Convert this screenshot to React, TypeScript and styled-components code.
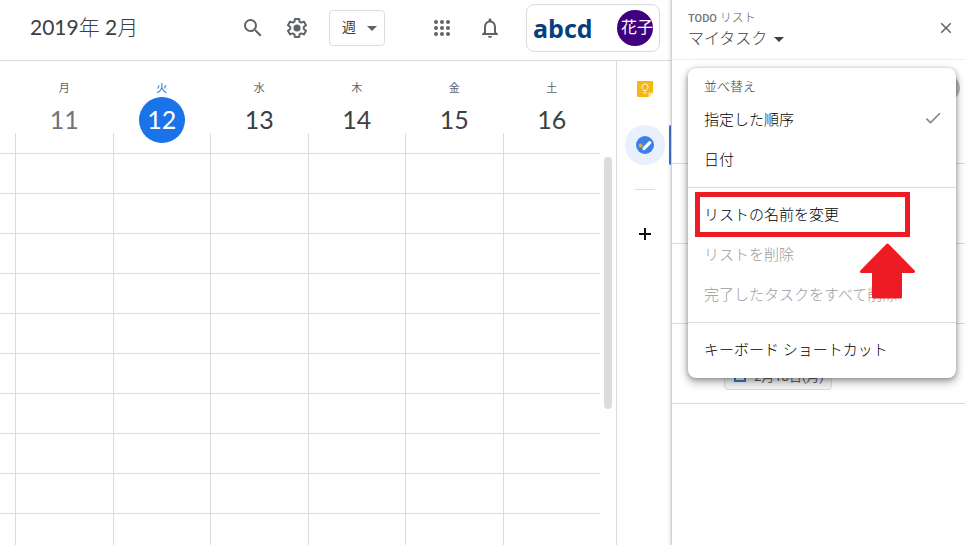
import React from "react";
import styled, { createGlobalStyle, css } from "styled-components";
import { MdNotificationsNone, MdSearch, MdCheck, MdClose } from "react-icons/md";

const line = "#dadce0";
const grey = "#5f6368";
const blue = "#1a73e8";

const GlobalStyle = createGlobalStyle`
  * { box-sizing: border-box; }
  body {
    margin: 0;
    background: #fff;
    color: #3c4043;
    font-family: Roboto, "Noto Sans CJK JP", sans-serif;
  }
  button, select { font: inherit; color: inherit; }
`;

const Page = styled.div`
  display: flex;
  height: 100vh;
  overflow: hidden;
`;

const Main = styled.main`
  flex: 1;
  min-width: 0;
  display: flex;
  flex-direction: column;
`;

const TopBar = styled.header`
  flex: none;
  display: flex;
  align-items: center;
  height: 61px;
  padding: 0 11px 5px 30px;
  border-bottom: 1px solid ${line};
`;

const MonthTitle = styled.h1`
  flex: 1;
  margin: 0;
  padding-bottom: 2px;
  font: 400 21px/32px Lato, "Noto Sans CJK JP", sans-serif;
  white-space: nowrap;
`;

const TitleUnit = styled.span`
  font-weight: 300;
`;

const IconButton = styled.button<{ $size?: number }>`
  display: flex;
  flex: none;
  align-items: center;
  justify-content: center;
  width: ${(p) => p.$size ?? 44}px;
  height: ${(p) => p.$size ?? 44}px;
  padding: 0;
  border: 0;
  border-radius: 50%;
  background: none;
  color: ${grey};
  cursor: pointer;
`;

const ViewPicker = styled.label`
  position: relative;
  display: flex;
  margin: 0 33px 0 10px;
`;

const ViewSelect = styled.select`
  appearance: none;
  width: 56px;
  height: 36px;
  padding: 0 20px 2px 12px;
  border: 1px solid ${line};
  border-radius: 4px;
  background: #fff;
  font-size: 14px;
`;

const PickerArrow = styled.svg`
  position: absolute;
  right: 8px;
  top: 16px;
  pointer-events: none;
`;

const AccountBox = styled.div`
  display: flex;
  align-items: center;
  justify-content: space-between;
  width: 134px;
  height: 48px;
  margin-left: 12px;
  padding: 0 6px;
  border: 1px solid ${line};
  border-radius: 8px;
`;

const Brand = styled.span`
  font: 700 25px/32px "Open Sans", sans-serif;
  color: #043f80;
`;

const Avatar = styled.button`
  width: 36px;
  height: 36px;
  padding: 0 0 0 4px;
  overflow: hidden;
  border: 0;
  border-radius: 50%;
  background: #3f0080;
  color: #fff;
  font-size: 16px;
  line-height: 36px;
  text-align: left;
  white-space: nowrap;
`;

const Body = styled.div`
  flex: 1;
  min-height: 0;
  display: flex;
`;

const Calendar = styled.section`
  flex: 1;
  min-width: 0;
  overflow: hidden;
`;

const WeekTable = styled.table`
  width: 100%;
  table-layout: fixed;
  border-collapse: separate;
  border-spacing: 0;
`;

const GutterCol = styled.col`
  width: 15px;
`;

const GutterCell = styled.td`
  height: 40px;
  padding: 0;
  border-bottom: 1px solid ${line};
`;

const DayHead = styled.th`
  position: relative;
  height: 93px;
  padding: 20px 0 0 1px;
  border-bottom: 1px solid ${line};
  vertical-align: top;
  font-weight: 400;

  &::before {
    content: "";
    position: absolute;
    left: 0;
    bottom: 0;
    height: 20px;
    border-left: 1px solid ${line};
  }
`;

const Weekday = styled.div<{ $today?: boolean }>`
  font-size: 11px;
  line-height: 16px;
  color: ${(p) => (p.$today ? blue : grey)};
`;

type Tone = "past" | "today" | "next";

const DayNumber = styled.div<{ $tone: Tone }>`
  width: 46px;
  height: 46px;
  margin: 0 auto;
  border-radius: 50%;
  font: 400 25px/45px Lato, sans-serif;
  color: ${(p) => (p.$tone === "past" ? "#70757a" : "#3c4043")};
  ${(p) =>
    p.$tone === "today" &&
    css`
      background: ${blue};
      color: #fff;
    `}
`;

const HourCell = styled.td`
  height: 40px;
  padding: 0;
  border-left: 1px solid ${line};
  border-bottom: 1px solid ${line};
`;

const ScrollTrack = styled.div`
  flex: none;
  width: 16px;
  padding: 96px 4px 0;
`;

const ScrollThumb = styled.div`
  height: 252px;
  border-radius: 4px;
  background: ${line};
`;

const Rail = styled.nav`
  flex: none;
  display: flex;
  flex-direction: column;
  align-items: center;
  width: 55px;
  padding: 8px 0 0 2px;
  border-left: 1px solid ${line};
`;

const RailButton = styled.button<{ $active?: boolean }>`
  position: relative;
  display: flex;
  flex: none;
  align-items: center;
  justify-content: center;
  width: 40px;
  height: 40px;
  margin-bottom: 16px;
  padding: 0;
  border: 0;
  border-radius: 50%;
  background: ${(p) => (p.$active ? "#e8f0fe" : "none")};
  ${(p) =>
    p.$active &&
    css`
      &::after {
        content: "";
        position: absolute;
        left: 44px;
        top: 0;
        width: 3px;
        height: 40px;
        border-radius: 2px 0 0 2px;
        background: #3c6fd0;
      }
    `}
`;

const RailDivider = styled.hr`
  width: 20px;
  margin: 8px 0 24px;
  border: 0;
  border-top: 1px solid ${line};
`;

const Panel = styled.aside`
  position: relative;
  flex: none;
  width: 294px;
  border-left: 1px solid #d0d1d3;
  background: #fff;
  box-shadow: -1px 0 3px rgba(60, 64, 67, 0.2);
`;

const PanelHeader = styled.header`
  display: flex;
  align-items: center;
  justify-content: space-between;
  height: 60px;
  padding: 0 4px 4px 16px;
  border-bottom: 1px solid #ececec;
`;

const PanelTitles = styled.div`
  padding-top: 6px;
`;

const PanelKicker = styled.div`
  font-size: 12px;
  line-height: 16px;
  font-weight: 300;
  color: ${grey};
`;

const KickerStrong = styled.span`
  font-size: 11px;
  font-weight: 500;
  color: #70757a;
`;

const ListButton = styled.button`
  display: flex;
  align-items: center;
  gap: 7px;
  padding: 0;
  border: 0;
  background: none;
  font-size: 16px;
  font-weight: 300;
  line-height: 24px;
  color: #3c4043;
`;

const TaskRow = styled.div<{ $tall?: boolean }>`
  display: flex;
  align-items: flex-end;
  justify-content: ${(p) => (p.$tall ? "flex-end" : "flex-start")};
  height: ${(p) => (p.$tall ? 104 : 80)}px;
  padding: ${(p) => (p.$tall ? "0 5px 62px 0" : "0 0 13px 52px")};
  border-bottom: 1px solid ${line};
`;

const RowKnob = styled.span`
  width: 26px;
  height: 26px;
  border-radius: 50%;
  background: #bdbdbd;
`;

const DateChip = styled.span`
  display: flex;
  align-items: center;
  gap: 7px;
  width: 108px;
  height: 28px;
  padding: 0 0 2px 8px;
  border: 1px solid ${line};
  border-radius: 4px;
  background: #f5f6f7;
  color: ${grey};
  font-size: 13px;
  white-space: nowrap;
`;

const Menu = styled.div`
  position: absolute;
  left: 16px;
  right: 9px;
  top: 68px;
  padding: 7px 0 9px;
  border-radius: 8px;
  background: #fff;
  box-shadow: 0 4px 8px 1px rgba(0, 0, 0, 0.28), 0 1px 4px rgba(0, 0, 0, 0.28);
`;

const MenuHeading = styled.div`
  padding: 0 16px;
  font-size: 13px;
  font-weight: 300;
  line-height: 24px;
  color: #3c4043;
`;

const MenuItem = styled.button`
  display: flex;
  align-items: center;
  justify-content: space-between;
  width: 100%;
  height: 40px;
  padding: 0 13px 2px 16px;
  border: 0;
  background: none;
  font-size: 15px;
  font-weight: 300;
  color: #000;
  text-align: left;
  white-space: nowrap;

  &:disabled {
    color: #9a9b9d;
  }
`;

const MenuDivider = styled.hr`
  margin: 8px 0 6px;
  border: 0;
  border-top: 1px solid ${line};
`;

const Callout = styled.div`
  position: absolute;
  left: 7px;
  top: 124px;
  width: 215px;
  height: 45px;
  border: 5px solid #ed1c24;
  pointer-events: none;
`;

const CalloutArrow = styled.svg`
  position: absolute;
  left: 171px;
  top: 175px;
  pointer-events: none;
`;

const days: { name: string; date: number; tone: Tone }[] = [
  { name: "月", date: 11, tone: "past" },
  { name: "火", date: 12, tone: "today" },
  { name: "水", date: 13, tone: "next" },
  { name: "木", date: 14, tone: "next" },
  { name: "金", date: 15, tone: "next" },
  { name: "土", date: 16, tone: "next" },
];

const hours = Array.from({ length: 24 }, (_, i) => i);

const GearIcon = () => (
  <svg width="24" height="24" viewBox="0 0 24 24" fill="none" aria-hidden="true">
    <path
      d="M9.9 2.9h4.2l.5 2.8 1.6.9 2.7-1 2.1 3.6-2.2 1.8v2l2.2 1.8-2.1 3.6-2.7-1-1.6.9-.5 2.8H9.9l-.5-2.8-1.6-.9-2.7 1L3 14.8 5.2 13v-2L3 9.2l2.1-3.6 2.7 1 1.6-.9z"
      stroke="currentColor"
      strokeWidth="2"
      strokeLinejoin="round"
    />
    <circle cx="12" cy="12" r="3.6" fill="currentColor" />
  </svg>
);

const AppsIcon = () => (
  <svg width="16" height="16" viewBox="0 0 16 16" fill="currentColor" aria-hidden="true">
    {[2, 8, 14].map((y) => [2, 8, 14].map((x) => <circle key={`${x}-${y}`} cx={x} cy={y} r="2" />))}
  </svg>
);

const KeepIcon = () => (
  <svg width="16" height="16" viewBox="0 0 16 16" aria-hidden="true">
    <path d="M1 0h14a1 1 0 0 1 1 1v10.5L11.5 16H1a1 1 0 0 1-1-1V1a1 1 0 0 1 1-1z" fill="#f4b714" />
    <path d="M11.5 11.5H16L11.5 16z" fill="#fbe3a0" />
    <path
      d="M6.6 9.6V8.7C5.5 8.1 4.9 7.2 4.9 6a3.1 3.1 0 0 1 6.2 0c0 1.2-.6 2.1-1.7 2.7v.9zM6.5 11.8h3"
      fill="none"
      stroke="#fff8e0"
      strokeWidth="1"
    />
  </svg>
);

const TasksIcon = () => (
  <svg width="18" height="18" viewBox="0 0 18 18" aria-hidden="true">
    <circle cx="9" cy="9" r="9" fill="#3f7ee8" />
    <path d="M8 12.5l5.8-5.8" stroke="#fff" strokeWidth="3.2" strokeLinecap="round" />
    <circle cx="4.6" cy="9.4" r="2" fill="#d9ab2e" />
  </svg>
);

const PlusIcon = () => (
  <svg width="12" height="12" viewBox="0 0 12 12" aria-hidden="true">
    <path d="M6 0v12M0 6h12" stroke="#111" strokeWidth="2" />
  </svg>
);

const ChipCalendarIcon = () => (
  <svg width="14" height="14" viewBox="0 0 14 14" fill="none" aria-hidden="true">
    <path d="M2 2h10v11H2zM2 5h10M4 0v2M10 0v2" stroke="#3879d9" strokeWidth="2" />
    <path d="M7 8h2v2H7z" fill="#3879d9" />
  </svg>
);

export default function App() {
  return (
    <Page>
      <GlobalStyle />
      <Main>
        <TopBar>
          <MonthTitle>
            2019<TitleUnit>年</TitleUnit> 2<TitleUnit>月</TitleUnit>
          </MonthTitle>
          <IconButton aria-label="検索">
            <MdSearch size={24} />
          </IconButton>
          <IconButton aria-label="設定">
            <GearIcon />
          </IconButton>
          <ViewPicker>
            <ViewSelect aria-label="表示" defaultValue="week">
              <option value="week">週</option>
            </ViewSelect>
            <PickerArrow width="10" height="5" viewBox="0 0 10 5" aria-hidden="true">
              <path d="M0 0h10L5 5z" fill={grey} />
            </PickerArrow>
          </ViewPicker>
          <IconButton $size={48} aria-label="アプリ">
            <AppsIcon />
          </IconButton>
          <IconButton $size={48} aria-label="通知">
            <MdNotificationsNone size={24} />
          </IconButton>
          <AccountBox>
            <Brand>abcd</Brand>
            <Avatar>花子</Avatar>
          </AccountBox>
        </TopBar>
        <Body>
          <Calendar>
            <WeekTable>
              <colgroup>
                <GutterCol />
                {days.map((d) => (
                  <col key={d.date} />
                ))}
              </colgroup>
              <thead>
                <tr>
                  <GutterCell />
                  {days.map((d) => (
                    <DayHead key={d.date} scope="col">
                      <Weekday $today={d.tone === "today"}>{d.name}</Weekday>
                      <DayNumber $tone={d.tone}>{d.date}</DayNumber>
                    </DayHead>
                  ))}
                </tr>
              </thead>
              <tbody>
                {hours.map((h) => (
                  <tr key={h}>
                    <GutterCell />
                    {days.map((d) => (
                      <HourCell key={d.date} />
                    ))}
                  </tr>
                ))}
              </tbody>
            </WeekTable>
          </Calendar>
          <ScrollTrack>
            <ScrollThumb />
          </ScrollTrack>
          <Rail>
            <RailButton aria-label="Keep">
              <KeepIcon />
            </RailButton>
            <RailButton $active aria-label="ToDo リスト">
              <TasksIcon />
            </RailButton>
            <RailDivider />
            <RailButton aria-label="追加">
              <PlusIcon />
            </RailButton>
          </Rail>
        </Body>
      </Main>
      <Panel>
        <PanelHeader>
          <PanelTitles>
            <PanelKicker>
              <KickerStrong>TODO</KickerStrong> リスト
            </PanelKicker>
            <ListButton>
              マイタスク
              <svg width="10" height="5" viewBox="0 0 10 5" aria-hidden="true">
                <path d="M0 0h10L5 5z" fill="currentColor" />
              </svg>
            </ListButton>
          </PanelTitles>
          <IconButton $size={30} aria-label="閉じる">
            <MdClose size={18} />
          </IconButton>
        </PanelHeader>
        <TaskRow $tall>
          <RowKnob />
        </TaskRow>
        <TaskRow />
        <TaskRow />
        <TaskRow>
          <DateChip>
            <ChipCalendarIcon />
            2月18日(月)
          </DateChip>
        </TaskRow>
        <Menu>
          <MenuHeading>並べ替え</MenuHeading>
          <MenuItem>
            指定した順序
            <MdCheck size={20} color="#80868b" />
          </MenuItem>
          <MenuItem>日付</MenuItem>
          <MenuDivider />
          <MenuItem>リストの名前を変更</MenuItem>
          <MenuItem disabled>リストを削除</MenuItem>
          <MenuItem disabled>完了したタスクをすべて削除</MenuItem>
          <MenuDivider />
          <MenuItem>キーボード ショートカット</MenuItem>
          <Callout />
          <CalloutArrow width="57" height="56" viewBox="0 0 57 56" aria-hidden="true">
            <path
              d="M28.5 2L54.5 28.5H41.5V54H14.5V28.5H2.5z"
              fill="#ed1c24"
              stroke="#ed1c24"
              strokeWidth="3"
              strokeLinejoin="round"
            />
          </CalloutArrow>
        </Menu>
      </Panel>
    </Page>
  );
}
